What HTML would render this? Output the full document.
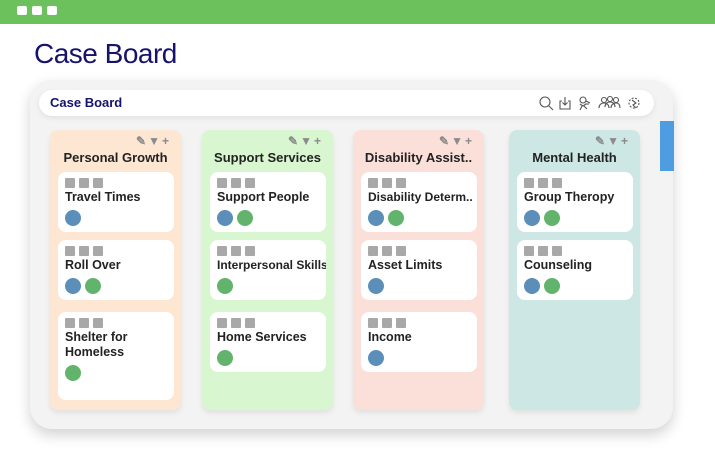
<!DOCTYPE html>
<html><head><meta charset="utf-8"><style>
*{margin:0;padding:0;box-sizing:border-box}
body{width:715px;height:460px;background:#fff;position:relative;overflow:hidden;font-family:"Liberation Sans",sans-serif;color:#1b1b1b}
.top{position:absolute;left:0;top:0;width:715px;height:24px;background:#6cc15c}
.dot{position:absolute;top:6px;width:10px;height:9px;background:#fff;border-radius:2px}
h1{position:absolute;left:34px;top:38px;font-size:28px;font-weight:400;color:#15136b;letter-spacing:-0.5px}
.board{position:absolute;left:30px;top:80px;width:643px;height:349px;background:#f3f3f3;border-radius:22px;box-shadow:0 6px 14px rgba(0,0,0,.18)}
.bar{position:absolute;left:39px;top:90px;width:615px;height:26px;background:#fff;border-radius:13px;box-shadow:0 2px 6px rgba(0,0,0,.08)}
.bar span{position:absolute;left:11px;top:5px;font-size:13px;font-weight:bold;color:#15136b}
.scroll{position:absolute;left:660px;top:121px;width:14px;height:50px;background:#4d9de0}
.col{position:absolute;top:130px;width:131px;height:280px;border-radius:8px;box-shadow:0 3px 6px rgba(0,0,0,.08)}
.col h3{position:absolute;left:0;right:0;top:20px;font-size:13px;font-weight:bold;text-align:center;color:#222}
.ic{position:absolute;right:10px;top:4px;font-size:12px;color:#8a8a8a;font-weight:bold;letter-spacing:2px}
.card{position:absolute;left:8px;width:116px;background:#fff;border-radius:8px;overflow:hidden}
.sq{position:absolute;top:6px;width:10px;height:10px;background:#a8a8a8;border-radius:1px}
.card p{position:absolute;left:7px;top:18px;font-size:12.5px;font-weight:bold;color:#222;line-height:15px;white-space:nowrap}
.c{position:absolute;width:16px;height:16px;border-radius:50%}
.b{background:#5b8fb9}.g{background:#62b46c}
</style></head><body>
<div class="top"><div class="dot" style="left:17px"></div><div class="dot" style="left:32px"></div><div class="dot" style="left:47px"></div></div>
<h1>Case Board</h1>
<div class="board"></div>
<div class="bar"><span>Case Board</span>
<svg style="position:absolute;left:499px;top:5px" width="112" height="16" viewBox="0 0 112 16" fill="none" stroke="#555" stroke-width="1.1">
<circle cx="7" cy="7" r="5"/><path d="M11 11l4 4"/>
<path d="M24 6h-2v8h10V6h-2M27 2v8M24.5 7.5l2.5 2.5 2.5-2.5"/>
<circle cx="45" cy="5" r="3"/><path d="M42 9l3 2 3-2M44 11l-2 4M46 11l3 3M48 6l4 2M47 9l4 0"/>
<circle cx="66" cy="5" r="2.5"/><circle cx="72" cy="4" r="2.5"/><circle cx="78" cy="5" r="2.5"/><path d="M61 13c0-3 2-5 5-5s5 2 5 5M67 12c0-3 2-5 5-5s5 2 5 5M73 13c0-3 2-5 5-5s4 2 4 5"/>
<circle cx="96" cy="8" r="5" stroke-dasharray="2 1.5"/><path d="M94 5l4 3-3 2 3 3" />
</svg></div>
<div class="scroll"></div>

<div class="col" style="left:50px;background:#fde6d2"><div class="ic">✎▼+</div><h3>Personal Growth</h3>
<div class="card" style="top:42px;height:60px"><div class="sq" style="left:7px"></div><div class="sq" style="left:21px"></div><div class="sq" style="left:35px"></div><p>Travel Times</p><div class="c b" style="left:7px;top:38px"></div></div>
<div class="card" style="top:110px;height:60px"><div class="sq" style="left:7px"></div><div class="sq" style="left:21px"></div><div class="sq" style="left:35px"></div><p>Roll Over</p><div class="c b" style="left:7px;top:38px"></div><div class="c g" style="left:27px;top:38px"></div></div>
<div class="card" style="top:182px;height:88px"><div class="sq" style="left:7px"></div><div class="sq" style="left:21px"></div><div class="sq" style="left:35px"></div><p>Shelter for<br>Homeless</p><div class="c g" style="left:7px;top:53px"></div></div>
</div>

<div class="col" style="left:202px;background:#d8f6cf"><div class="ic">✎▼+</div><h3>Support Services</h3>
<div class="card" style="top:42px;height:60px"><div class="sq" style="left:7px"></div><div class="sq" style="left:21px"></div><div class="sq" style="left:35px"></div><p>Support People</p><div class="c b" style="left:7px;top:38px"></div><div class="c g" style="left:27px;top:38px"></div></div>
<div class="card" style="top:110px;height:60px"><div class="sq" style="left:7px"></div><div class="sq" style="left:21px"></div><div class="sq" style="left:35px"></div><p style="font-size:12px">Interpersonal Skills</p><div class="c g" style="left:7px;top:38px"></div></div>
<div class="card" style="top:182px;height:60px"><div class="sq" style="left:7px"></div><div class="sq" style="left:21px"></div><div class="sq" style="left:35px"></div><p>Home Services</p><div class="c g" style="left:7px;top:38px"></div></div>
</div>

<div class="col" style="left:353px;background:#fbe0da"><div class="ic">✎▼+</div><h3>Disability Assist..</h3>
<div class="card" style="top:42px;height:60px"><div class="sq" style="left:7px"></div><div class="sq" style="left:21px"></div><div class="sq" style="left:35px"></div><p style="font-size:12px">Disability Determ..</p><div class="c b" style="left:7px;top:38px"></div><div class="c g" style="left:27px;top:38px"></div></div>
<div class="card" style="top:110px;height:60px"><div class="sq" style="left:7px"></div><div class="sq" style="left:21px"></div><div class="sq" style="left:35px"></div><p>Asset Limits</p><div class="c b" style="left:7px;top:38px"></div></div>
<div class="card" style="top:182px;height:60px"><div class="sq" style="left:7px"></div><div class="sq" style="left:21px"></div><div class="sq" style="left:35px"></div><p>Income</p><div class="c b" style="left:7px;top:38px"></div></div>
</div>

<div class="col" style="left:509px;background:#cce7e4"><div class="ic">✎▼+</div><h3>Mental Health</h3>
<div class="card" style="top:42px;height:60px"><div class="sq" style="left:7px"></div><div class="sq" style="left:21px"></div><div class="sq" style="left:35px"></div><p>Group Theropy</p><div class="c b" style="left:7px;top:38px"></div><div class="c g" style="left:27px;top:38px"></div></div>
<div class="card" style="top:110px;height:60px"><div class="sq" style="left:7px"></div><div class="sq" style="left:21px"></div><div class="sq" style="left:35px"></div><p>Counseling</p><div class="c b" style="left:7px;top:38px"></div><div class="c g" style="left:27px;top:38px"></div></div>
</div>
</body></html>
